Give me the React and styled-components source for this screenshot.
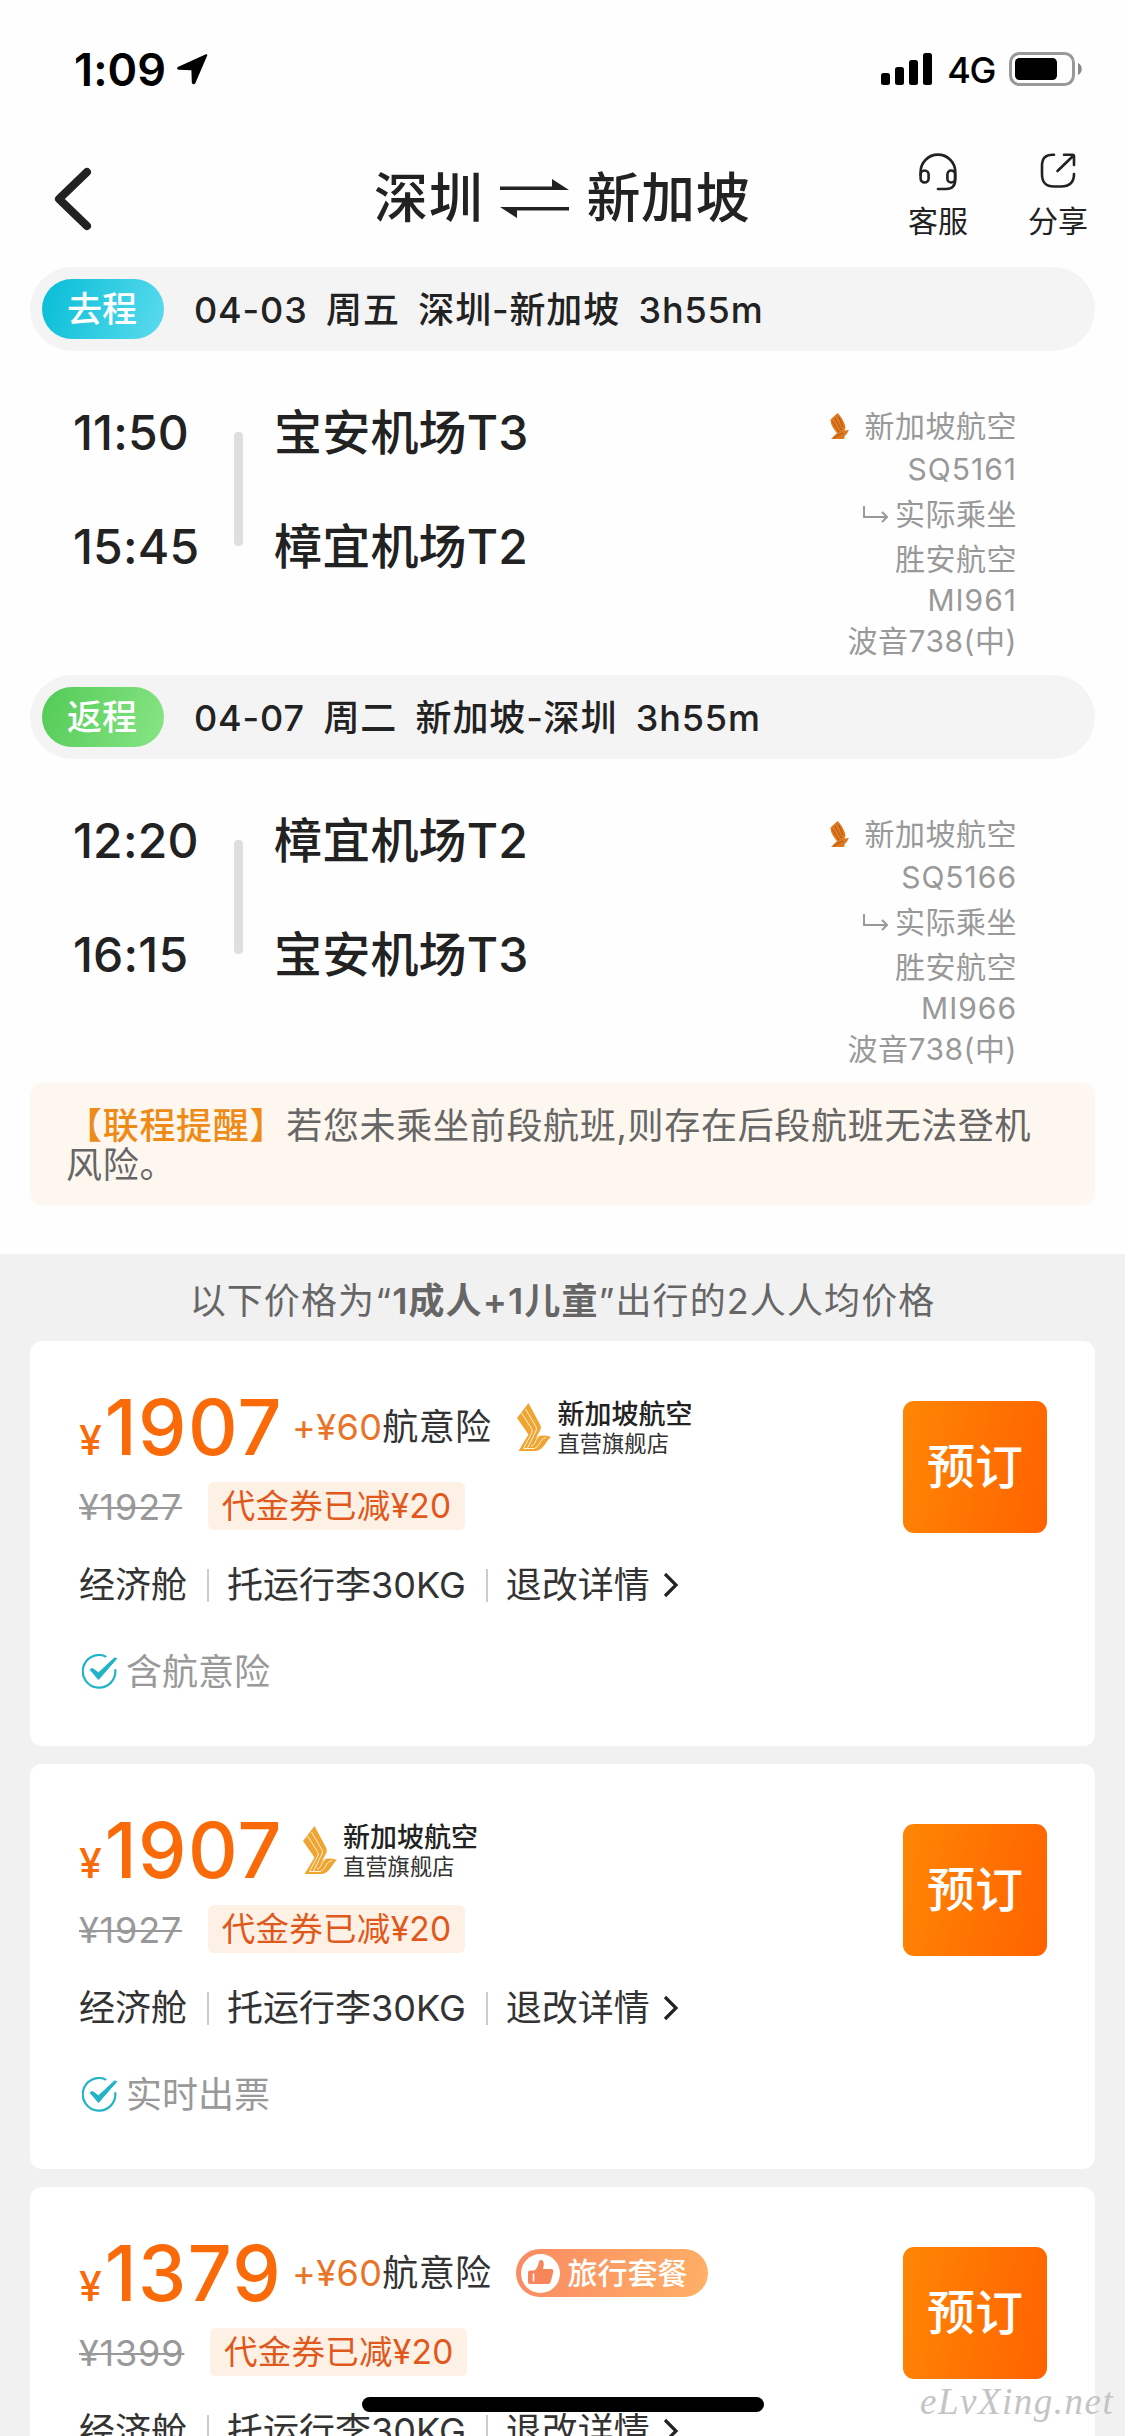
import React from "react";
import styled, { createGlobalStyle } from "styled-components";

const Global = createGlobalStyle`
  * { box-sizing: border-box; }
  body {
    margin: 0;
    background: #fff;
    font-family: Inter, "Noto Sans CJK SC", sans-serif;
    color: #222;
  }
  button { font-family: inherit; border: 0; padding: 0; background: none; }
`;

const Screen = styled.div`
  position: relative;
  width: 1125px;
  height: 2436px;
  overflow: hidden;
  background: #f1f1f1;
`;

const Top = styled.section`
  height: 1254px;
  background: #fefefe;
`;

const StatusBar = styled.div`
  display: flex;
  justify-content: space-between;
  height: 138px;
  padding: 0 42px 0 74px;
  color: #000;
`;

const StatusGroup = styled.div`
  display: flex;
  align-items: center;
  height: 138px;
`;

const Clock = styled.span`
  font-size: 45px;
  font-weight: 600;
  letter-spacing: 0.1px;
  margin-right: 11px;
`;

const Network = styled.span`
  font-size: 36px;
  font-weight: 500;
  letter-spacing: -1.4px;
  margin: 2px 14px 0 14px;
`;

const Header = styled.header`
  display: flex;
  align-items: flex-start;
  height: 129px;
  padding: 0 37px 0 54px;
`;

const BackButton = styled.button`
  display: flex;
  width: 320px;
  padding-top: 28px;
`;

const Title = styled.h1`
  display: flex;
  align-items: center;
  flex: 1;
  height: 122px;
  margin: 0;
  font-size: 54px;
  font-weight: 500;
  letter-spacing: 0.7px;
  line-height: 54px;
  white-space: nowrap;
`;

const SwapIcon = styled.svg`
  margin: 0 16px 0 17px;
`;

const Actions = styled.div`
  display: flex;
  gap: 60px;
  padding-top: 15px;
`;

const Action = styled.button`
  display: flex;
  flex-direction: column;
  align-items: center;
  width: 60px;
  font-size: 30px;
  line-height: 40px;
  white-space: nowrap;
  color: #222;

  span { margin-top: 10px; }
`;

const LegBar = styled.div`
  display: flex;
  align-items: center;
  height: 84px;
  margin: 0 30px;
  padding-left: 12px;
  border-radius: 42px;
  background: #f4f4f4;
`;

const LegTag = styled.span`
  width: 122px;
  height: 60px;
  margin-right: 30px;
  padding-right: 2px;
  border-radius: 30px;
  background: ${(p) =>
    p.$back
      ? "linear-gradient(110deg, #52cb56, #88e586)"
      : "linear-gradient(110deg, #06bdd6, #5cdbee)"};
  color: #fff;
  font-size: 35px;
  font-weight: 500;
  line-height: 60px;
  text-align: center;
`;

const LegSummary = styled.div`
  display: flex;
  gap: 18.5px;
  font-size: 36px;
  font-weight: 500;
  letter-spacing: 0.85px;
  line-height: 84px;
  padding-top: 2px;
`;

const LegBody = styled.div`
  display: flex;
  height: 324px;
  padding: 25px 108px 0 73px;
`;

const Stops = styled.div`
  width: ${(p) => p.$width}px;
  font-size: 48px;
  font-weight: 500;
  letter-spacing: 0.2px;
  line-height: 114px;
  white-space: nowrap;
`;

const Route = styled.div`
  width: 9px;
  height: 114px;
  margin: 56px 31px 0 0;
  border-radius: 4px;
  background: #dfdfdf;
`;

const Carrier = styled.div`
  display: flex;
  flex: 1;
  flex-direction: column;
  align-items: flex-end;
  padding-top: 27px;
  font-size: 30px;
  letter-spacing: 0.5px;
  line-height: 30px;
  color: #999;
`;

const CarrierLine = styled.div`
  display: flex;
  align-items: center;
  gap: ${(p) => p.$gap || 0}px;
  height: ${(p) => p.$height}px;
  letter-spacing: ${(p) => (p.$code ? 1 : 0.5)}px;
`;

const Notice = styled.p`
  height: 122px;
  margin: 0 30px;
  padding: 24px 30px 0 36px;
  border-radius: 12px;
  background: #fef7ef;
  color: #666;
  font-size: 36px;
  letter-spacing: 0.7px;
  line-height: 39px;

  b { color: #ee8a16; font-weight: 500; }
`;

const PriceNote = styled.p`
  height: 87px;
  margin: 0;
  color: #666;
  font-size: 36px;
  letter-spacing: 1.1px;
  line-height: 94px;
  text-align: center;

  b { font-weight: 600; }
`;

const Cards = styled.main`
  display: grid;
  grid-auto-rows: 405px;
  gap: 18px;
  padding: 0 30px;
`;

const Card = styled.article`
  display: flex;
  justify-content: space-between;
  padding: 43px 48px 0 49px;
  border-radius: 12px;
  background: #fff;
`;

const PriceRow = styled.div`
  display: flex;
  align-items: center;
  height: 86px;
`;

const Price = styled.div`
  width: 213px;
  color: #fb6a08;
  font-size: 77px;
  font-weight: 500;
  line-height: 86px;
  letter-spacing: 1.3px;
  white-space: nowrap;

  small { margin-right: 3px; font-size: 41px; line-height: 41px; letter-spacing: 0; }
`;

const Extra = styled.div`
  margin-right: 15px;
  font-size: 36px;
  letter-spacing: 0.4px;
  line-height: 36px;
  color: #333;
  white-space: nowrap;

  em { font-style: normal; color: #e97427; }
`;

const Store = styled.div`
  display: flex;
  align-items: center;
  gap: 5px;
  margin-left: 11px;
`;

const StoreName = styled.div`
  font-size: 27px;
  font-weight: 500;
  line-height: 33px;
  color: #222;

  small {
    display: block;
    font-size: 22.3px;
    font-weight: 400;
    line-height: 26px;
    color: #333;
  }
`;

const Package = styled.div`
  display: flex;
  align-items: center;
  gap: 7px;
  width: 192px;
  height: 48px;
  margin-left: 10px;
  padding-left: 5px;
  border-radius: 24px;
  background: linear-gradient(100deg, #fa8a62, #ffb066);
  color: #fff;
  font-size: 30px;
  font-weight: 500;
  line-height: 30px;
  white-space: nowrap;
`;

const DiscountRow = styled.div`
  display: flex;
  align-items: center;
  gap: 26px;
  height: 48px;
  margin-top: 12px;
`;

const OldPrice = styled.del`
  color: #999;
  font-size: 36px;
  letter-spacing: 0.8px;
  line-height: 48px;
  padding-top: 1px;
  text-decoration-thickness: 2px;
`;

const Voucher = styled.span`
  width: 257px;
  height: 48px;
  border-radius: 6px;
  background: #fdf1e5;
  color: #e0581c;
  font-size: 33.5px;
  letter-spacing: 0.3px;
  line-height: 48px;
  text-align: center;
`;

const TermsRow = styled.div`
  display: flex;
  align-items: center;
  height: 50px;
  margin-top: 30px;
  color: #333;
  font-size: 36px;
  line-height: 36px;
  white-space: nowrap;
`;

const Divider = styled.i`
  width: 2px;
  height: 33px;
  margin: 0 18px 0 ${(p) => p.$left}px;
  background: #ccc;
`;

const Chevron = styled.svg`
  margin-left: 13px;
`;

const PerkRow = styled.div`
  display: flex;
  align-items: center;
  gap: 8px;
  height: 50px;
  margin-top: 37px;
  padding-left: 3px;
  color: #999;
  font-size: 36px;
  line-height: 36px;
`;

const BookButton = styled.button`
  width: 144px;
  height: 132px;
  margin-top: 17px;
  padding-bottom: 1px;
  border-radius: 11px;
  background: linear-gradient(100deg, #ff8604, #ff6200);
  color: #fff;
  font-size: 48px;
  font-weight: 500;
  line-height: 48px;
  white-space: nowrap;
`;

const HomeIndicator = styled.div`
  position: absolute;
  left: 362px;
  top: 2397px;
  width: 402px;
  height: 15px;
  border-radius: 8px;
  background: #000;
`;

const Watermark = styled.div`
  position: absolute;
  left: 920px;
  top: 2380px;
  color: #c4c4c4;
  font: italic 37px/44px "Liberation Serif", serif;
  letter-spacing: 1.5px;
`;

const SignalIcon = () => (
  <svg width="52" height="33" viewBox="0 0 52 33">
    <rect x="0" y="20" width="9" height="12" rx="2.5" />
    <rect x="14" y="14" width="9" height="18" rx="2.5" />
    <rect x="28" y="7" width="9" height="25" rx="2.5" />
    <rect x="42" y="0" width="9" height="32" rx="2.5" />
  </svg>
);

const BatteryIcon = () => (
  <svg width="74" height="34" viewBox="0 0 74 34">
    <rect x="1.5" y="1.5" width="63" height="31" rx="9" fill="none" stroke="#999" strokeWidth="3" />
    <rect x="6" y="6" width="42" height="22" rx="4.5" />
    <path d="M69 11 C74 13 74 21 69 23 Z" fill="#888" />
  </svg>
);

const LocationIcon = () => (
  <svg width="31" height="31" viewBox="0 0 31 31" stroke="#000" strokeWidth="2" strokeLinejoin="round">
    <path d="M29.3 1.2 L1.2 13.8 Q1 14.8 2 14.8 L14.6 15.2 Q15.4 15.2 15.4 16 L15.8 28.6 Q16.6 30 17.4 28.8 Z" />
  </svg>
);

const HeadsetIcon = () => (
  <svg width="38" height="38" viewBox="0 0 38 38" fill="none" stroke="#222" strokeWidth="2.6" strokeLinecap="round">
    <path d="M1.6 22 V19 A17.3 17.3 0 0 1 36.3 19 V26 C36.3 32.5 33 36 27 36 H19" />
    <rect x="1.6" y="17.5" width="8" height="12" rx="4" />
    <rect x="28.4" y="17.5" width="7.6" height="12" rx="3.8" />
  </svg>
);

const ShareIcon = () => (
  <svg width="36" height="38" viewBox="0 0 36 38" fill="none" stroke="#222" strokeWidth="2.6" strokeLinecap="round" strokeLinejoin="round">
    <path d="M14 1.8 C5.5 1.4 2 5 2 13 V21 C2 29.5 5.5 33.5 14 33.5 H21 C29.5 33.5 34 30 34 21" />
    <path d="M24 1.8 H33 Q34 1.8 34 3 V12 M33 3 L17.5 18" />
  </svg>
);

const HookArrow = () => (
  <svg width="25" height="17" viewBox="0 0 25 17" fill="none" stroke="#999" strokeWidth="2">
    <path d="M1 0 V11 H24 M19 6 L24 11 L19 16" />
  </svg>
);

const TailIcon = () => (
  <svg width="19" height="27" viewBox="0 0 19 27">
    <path d="M7.5 0 C11 3 14.5 9 15.5 14 L14.5 17.5 L18.8 17 C17.5 20 17 21 15 22.5 L14 26 H1 L7 20 C4 16.5 0.5 12 0.5 6.5 Z" fill="#dd7a20" />
    <path d="M4.5 5 L11.5 17 M2 8 L9 19 M8.5 3.5 L13 14 M3 25 L13 20" stroke="#b3560f" fill="none" />
  </svg>
);

const StoreLogo = () => (
  <svg width="35" height="49" viewBox="0 0 35 49">
    <path d="M11.5 0 L23.5 22.5 Q24.5 25 23 27.5 L18.5 36 C21.5 32.5 25 31.5 34 34 C30 36 27 47 19 48 H1.5 L11.5 31.5 L0 15 Z" fill="#f0a431" />
    <path d="M8.5 6 L18.8 23.5 Q20 25.5 19 28 L10.5 45 M4.5 10 L14.5 25.5 Q15.8 27.5 14.8 30 L6.5 45.5 H17 C23 44 22 36 29 34.5 M14 43 C19 42 18 36 22 34" stroke="#fff3d8" strokeWidth="1" fill="none" />
  </svg>
);

const ThumbIcon = () => (
  <svg width="39" height="39" viewBox="0 0 39 39">
    <circle cx="19.5" cy="19.5" r="19.5" fill="#fff" />
    <path d="M9 16.5 H13.5 C16.5 14 17.5 10.5 18 7.5 C18.5 5.2 22.8 5 22.8 9.5 C22.8 12 22.3 13.8 22 15 H30 C32.5 15 32.6 17 32 19 L29.8 27.5 C29.3 29.2 28.5 30 27 30 H9 Q7 30 7 28.3 V18.5 Q7 16.5 9 16.5 Z" fill="#f8855a" />
    <path d="M12.5 19.5 V27.5" stroke="#fff" strokeWidth="1.6" />
  </svg>
);

const CheckIcon = () => (
  <svg width="36" height="36" viewBox="0 0 36 36" fill="none" stroke="#21b3c8">
    <path d="M23.5 2.4 A16.3 16.3 0 1 0 33.3 16" strokeWidth="2.2" strokeLinecap="round" />
    <path d="M8 15.5 L16.5 25.5 L34.8 4.5 L32.5 4 L16.5 18.8 L10.5 14.5 Z" fill="#21b3c8" strokeWidth="1" strokeLinejoin="round" />
  </svg>
);

const legs = [
  {
    tag: "去程", date: "04-03", day: "周五", route: "深圳-新加坡", duration: "3h55m",
    times: ["11:50", "15:45"], airports: ["宝安机场T3", "樟宜机场T2"],
    flight: "SQ5161", actual: "MI961",
  },
  {
    tag: "返程", back: true, date: "04-07", day: "周二", route: "新加坡-深圳", duration: "3h55m",
    times: ["12:20", "16:15"], airports: ["樟宜机场T2", "宝安机场T3"],
    flight: "SQ5166", actual: "MI966",
  },
];

const fares = [
  { price: "1907", old: "¥1927", extra: true, perk: "含航意险" },
  { price: "1907", old: "¥1927", perk: "实时出票" },
  { price: "1379", old: "¥1399", extra: true, bundle: true, perk: "含航意险" },
];

function Leg({ leg }) {
  return (
    <section>
      <LegBar>
        <LegTag $back={leg.back}>{leg.tag}</LegTag>
        <LegSummary>
          <span>{leg.date}</span>
          <span>{leg.day}</span>
          <span>{leg.route}</span>
          <span>{leg.duration}</span>
        </LegSummary>
      </LegBar>
      <LegBody>
        <Stops $width={161}>
          {leg.times.map((t) => <div key={t}>{t}</div>)}
        </Stops>
        <Route />
        <Stops $width={300}>
          {leg.airports.map((a) => <div key={a}>{a}</div>)}
        </Stops>
        <Carrier>
          <CarrierLine $height={46} $gap={16}><TailIcon />新加坡航空</CarrierLine>
          <CarrierLine $height={40} $code>{leg.flight}</CarrierLine>
          <CarrierLine $height={50} $gap={7}><HookArrow />实际乘坐</CarrierLine>
          <CarrierLine $height={40}>胜安航空</CarrierLine>
          <CarrierLine $height={42} $code>{leg.actual}</CarrierLine>
          <CarrierLine $height={40}>波音738(中)</CarrierLine>
        </Carrier>
      </LegBody>
    </section>
  );
}

function Fare({ fare }) {
  return (
    <Card>
      <div>
        <PriceRow>
          <Price><small>¥</small>{fare.price}</Price>
          {fare.extra && <Extra><em>+¥60</em>航意险</Extra>}
          {fare.bundle ? (
            <Package><ThumbIcon />旅行套餐</Package>
          ) : (
            <Store>
              <StoreLogo />
              <StoreName>新加坡航空<small>直营旗舰店</small></StoreName>
            </Store>
          )}
        </PriceRow>
        <DiscountRow>
          <OldPrice>{fare.old}</OldPrice>
          <Voucher>代金券已减¥20</Voucher>
        </DiscountRow>
        <TermsRow>
          经济舱
          <Divider $left={20} />
          托运行李30KG
          <Divider $left={20} />
          退改详情
          <Chevron width="16" height="26" viewBox="0 0 16 26" fill="none" stroke="#222" strokeWidth="3.2">
            <path d="M2 2 L13 13 L2 24" />
          </Chevron>
        </TermsRow>
        <PerkRow><CheckIcon />{fare.perk}</PerkRow>
      </div>
      <BookButton>预订</BookButton>
    </Card>
  );
}

export default function App() {
  return (
    <Screen>
      <Global />
      <Top>
        <StatusBar>
          <StatusGroup>
            <Clock>1:09</Clock>
            <LocationIcon />
          </StatusGroup>
          <StatusGroup>
            <SignalIcon />
            <Network>4G</Network>
            <BatteryIcon />
          </StatusGroup>
        </StatusBar>
        <Header>
          <BackButton aria-label="返回">
            <svg width="38" height="66" viewBox="0 0 38 66" fill="none" stroke="#222" strokeWidth="8" strokeLinecap="round" strokeLinejoin="round">
              <path d="M33 6 L5 33 L33 60" />
            </svg>
          </BackButton>
          <Title>
            深圳
            <SwapIcon width="70" height="40" viewBox="0 0 70 40" fill="#222">
              <path d="M0 11 V7.5 H52 V0 L69 11 Z M69 28 V31.5 H17 V39 L0 28 Z" />
            </SwapIcon>
            新加坡
          </Title>
          <Actions>
            <Action><HeadsetIcon /><span>客服</span></Action>
            <Action><ShareIcon /><span>分享</span></Action>
          </Actions>
        </Header>
        {legs.map((leg) => <Leg key={leg.tag} leg={leg} />)}
        <Notice><b>【联程提醒】</b>若您未乘坐前段航班,则存在后段航班无法登机风险。</Notice>
      </Top>
      <PriceNote>以下价格为“<b>1成人+1儿童</b>”出行的2人人均价格</PriceNote>
      <Cards>
        {fares.map((fare, i) => <Fare key={i} fare={fare} />)}
      </Cards>
      <HomeIndicator />
      <Watermark>eLvXing.net</Watermark>
    </Screen>
  );
}
